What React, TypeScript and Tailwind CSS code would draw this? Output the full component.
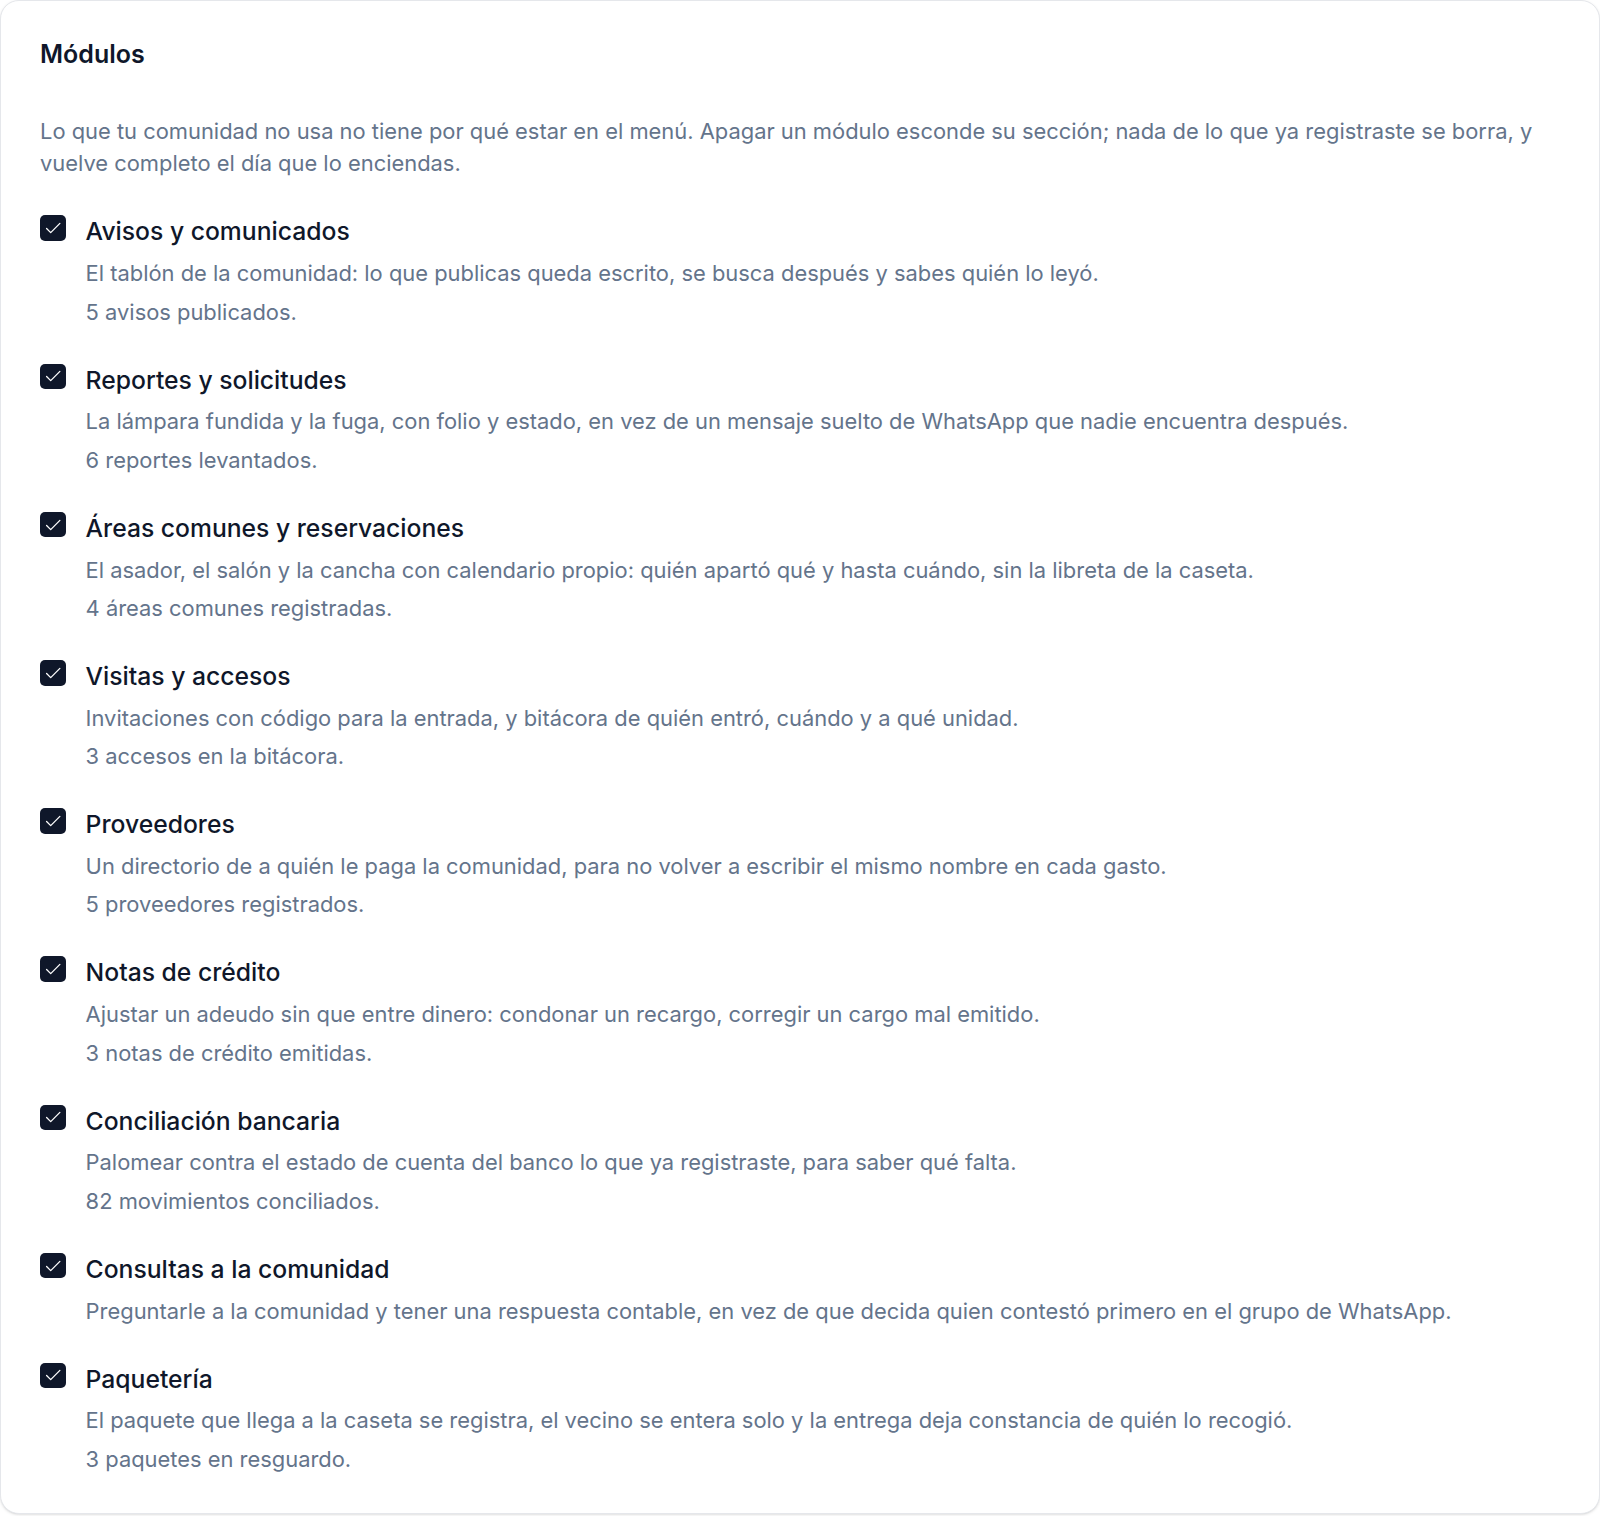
import React from "react";

type Mod = { title: string; desc: string; count?: string };

const mods: Mod[] = [
  {
    title: "Avisos y comunicados",
    desc: "El tablón de la comunidad: lo que publicas queda escrito, se busca después y sabes quién lo leyó.",
    count: "5 avisos publicados.",
  },
  {
    title: "Reportes y solicitudes",
    desc: "La lámpara fundida y la fuga, con folio y estado, en vez de un mensaje suelto de WhatsApp que nadie encuentra después.",
    count: "6 reportes levantados.",
  },
  {
    title: "Áreas comunes y reservaciones",
    desc: "El asador, el salón y la cancha con calendario propio: quién apartó qué y hasta cuándo, sin la libreta de la caseta.",
    count: "4 áreas comunes registradas.",
  },
  {
    title: "Visitas y accesos",
    desc: "Invitaciones con código para la entrada, y bitácora de quién entró, cuándo y a qué unidad.",
    count: "3 accesos en la bitácora.",
  },
  {
    title: "Proveedores",
    desc: "Un directorio de a quién le paga la comunidad, para no volver a escribir el mismo nombre en cada gasto.",
    count: "5 proveedores registrados.",
  },
  {
    title: "Notas de crédito",
    desc: "Ajustar un adeudo sin que entre dinero: condonar un recargo, corregir un cargo mal emitido.",
    count: "3 notas de crédito emitidas.",
  },
  {
    title: "Conciliación bancaria",
    desc: "Palomear contra el estado de cuenta del banco lo que ya registraste, para saber qué falta.",
    count: "82 movimientos conciliados.",
  },
  {
    title: "Consultas a la comunidad",
    desc: "Preguntarle a la comunidad y tener una respuesta contable, en vez de que decida quien contestó primero en el grupo de WhatsApp.",
  },
  {
    title: "Paquetería",
    desc: "El paquete que llega a la caseta se registra, el vecino se entera solo y la entrega deja constancia de quién lo recogió.",
    count: "3 paquetes en resguardo.",
  },
];

function Check() {
  return (
    <span className="mt-[3px] flex h-[25.6px] w-[25.6px] shrink-0 items-center justify-center rounded-[5px] bg-[#0f172a]">
      <svg width="22" height="22" viewBox="0 0 24 24" fill="none" stroke="white" strokeWidth="1.4" strokeLinecap="round" strokeLinejoin="round">
        <path d="M5 12.5l4.5 4.5L19.5 7" />
      </svg>
    </span>
  );
}

export default function App() {
  return (
    <div className="min-h-[1516px] bg-white" style={{ fontFamily: "Inter, 'Noto Sans', sans-serif" }}>
      <div className="rounded-[19px] border border-[#e5e7eb] bg-white px-[39px] pt-[34px] pb-[38px] shadow-sm">
        <h2 className="text-[25px] leading-[38.4px] font-semibold text-[#0f172a]">Módulos</h2>
        <p className="mt-[42px] text-[21.9px] leading-[32px] text-[#64748b]">
          Lo que tu comunidad no usa no tiene por qué estar en el menú. Apagar un módulo esconde su sección; nada de lo que ya registraste se borra, y vuelve completo el día que lo enciendas.
        </p>
        <div className="mt-[33px] flex flex-col gap-[33px]">
          {mods.map((m) => (
            <label key={m.title} className="flex items-start gap-[20px]">
              <Check />
              <div className="flex flex-col">
                <div className="text-[24.7px] leading-[38.4px] font-medium text-[#0f172a]">{m.title}</div>
                <div className="mt-[6.4px] text-[21.9px] leading-[32px] text-[#64748b]">{m.desc}</div>
                {m.count && (
                  <div className="mt-[6.4px] text-[21.9px] leading-[32px] text-[#64748b]">{m.count}</div>
                )}
              </div>
            </label>
          ))}
        </div>
      </div>
    </div>
  );
}
